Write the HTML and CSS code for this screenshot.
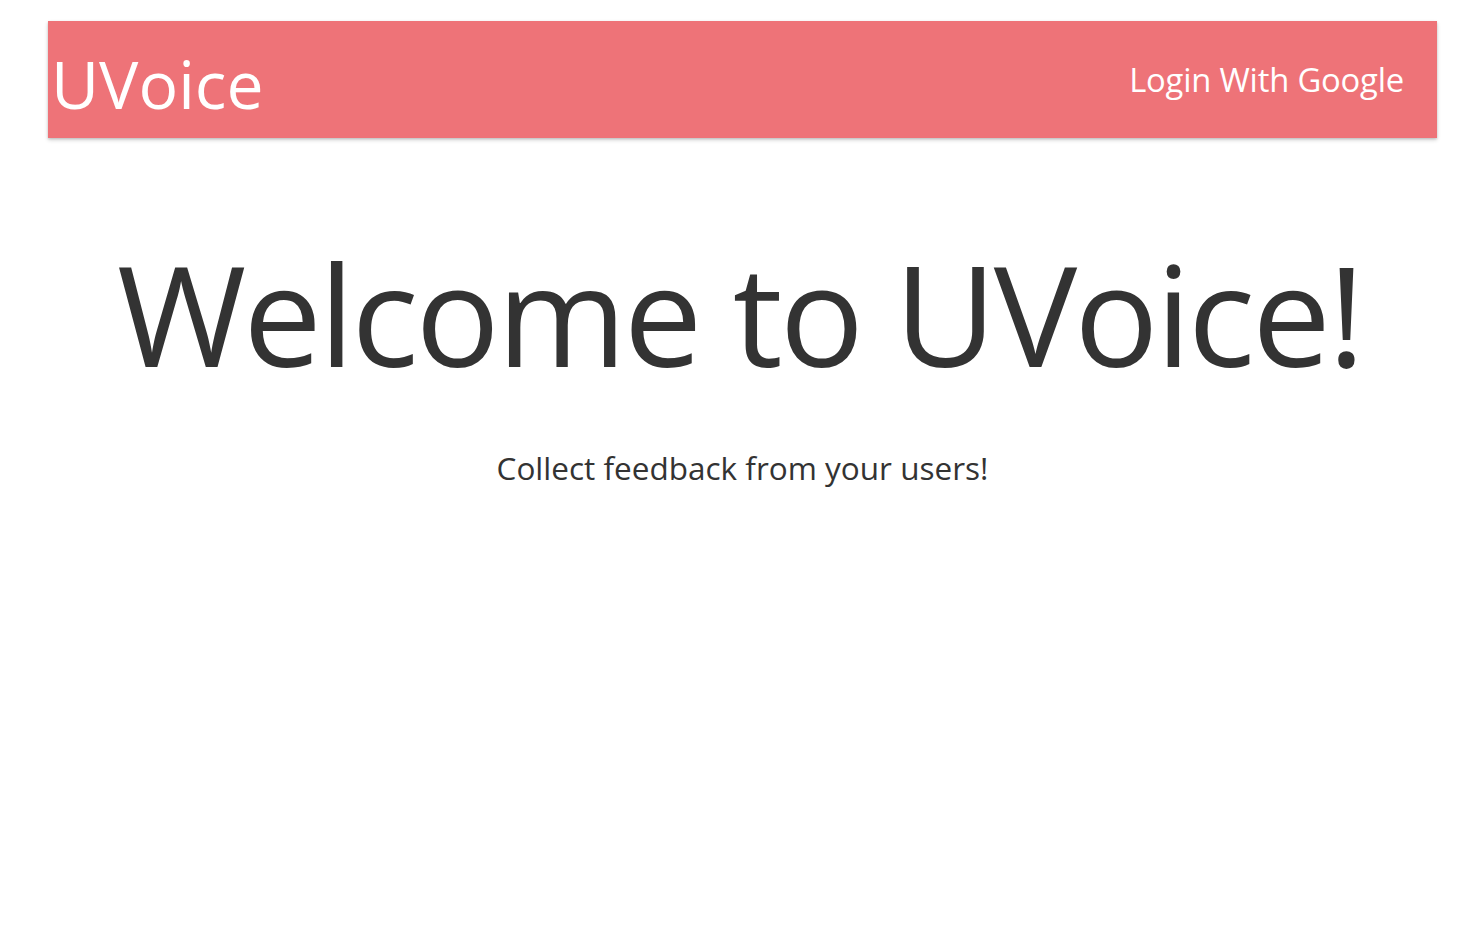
FILE: index.html
```html
<!DOCTYPE html>
<html>
<head>
<meta charset="utf-8">
<title>UVoice</title>
<link rel="stylesheet" href="styles.css">
</head>
<body>
<nav class="navbar">
  <a class="brand" href="#">UVoice</a>
  <a class="login" href="#">Login With Google</a>
</nav>
<main class="hero">
  <h1 class="hero-title">Welcome to UVoice!</h1>
  <p class="hero-sub">Collect feedback from your users!</p>
</main>
</body>
</html>
```
FILE: styles.css
```css
html, body {
  margin: 0;
  padding: 0;
  background: #ffffff;
}
body {
  font-family: "Open Sans", "Noto Sans", sans-serif;
  color: #333333;
}
.navbar {
  margin: 21px 42px 0 48px;
  height: 117px;
  background: #ee7378;
  box-shadow: 0 2px 4px rgba(0,0,0,0.18), 0 1px 2px rgba(0,0,0,0.12);
  display: flex;
  align-items: center;
  justify-content: space-between;
  padding: 0 33px 0 3px;
}
.brand {
  color: #ffffff;
  text-decoration: none;
  font-size: 66px;
  line-height: 1;
  padding-top: 6px;
}
.login {
  color: #ffffff;
  text-decoration: none;
  font-size: 32.8px;
  letter-spacing: -0.2px;
}
.hero {
  text-align: center;
}
.hero-title {
  font-weight: 400;
  font-size: 140px;
  letter-spacing: -2.9px;
  line-height: 1;
  margin: 105px 0 0 0;
}
.hero-sub {
  font-size: 31.5px;
  margin: 63px 0 0 0;
  padding-left: 6px;
}
```
